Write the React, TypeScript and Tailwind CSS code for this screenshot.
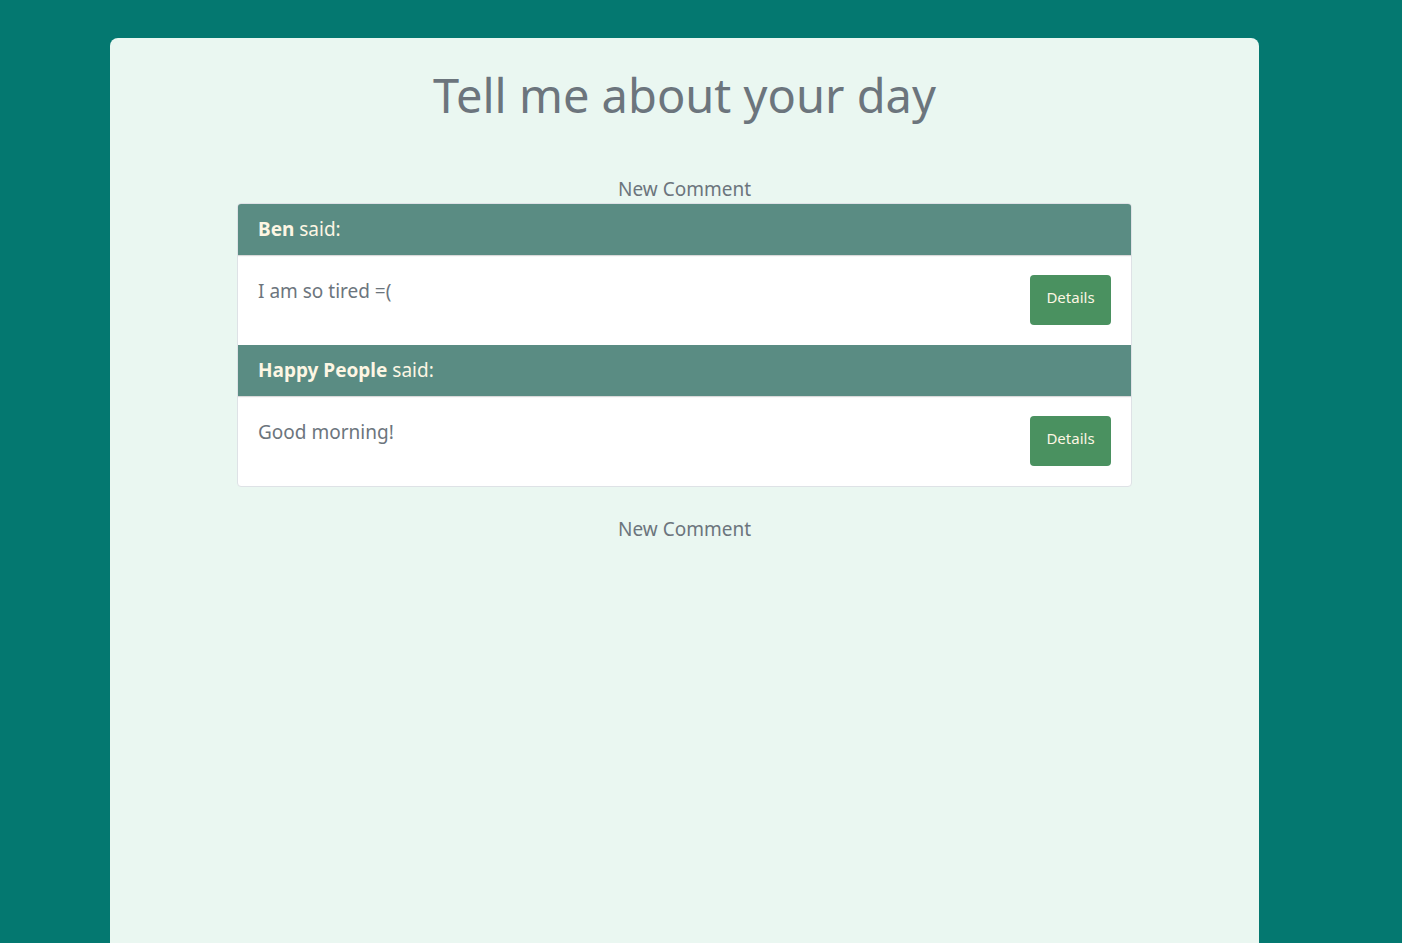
export default function App() {
  const comments = [
    { author: "Ben", text: "I am so tired =(" },
    { author: "Happy People", text: "Good morning!" },
  ]

  return (
    <div className="min-h-[943px] bg-[#047870] pl-[110px] pt-[38px] font-['Noto_Sans',sans-serif] text-[#6c757d]">
      <div className="w-[1149px] min-h-[905px] rounded-t-lg bg-[#eaf7f1] pt-[34px]">
        <h1 className="text-center text-[47px] leading-[1] font-normal text-[#6c757d]">Tell me about your day</h1>

        <div className="mt-[57px] text-center text-[19px] leading-[27px]">New Comment</div>

        <div className="mx-auto w-[895px] overflow-hidden rounded border border-[#dee2e6] bg-white">
          {comments.map((c) => (
            <div key={c.author}>
              <div className="bg-[#5a8c83] px-5 py-3 text-[19px] leading-[27px] text-[#fdf6e3] shadow-[0_1px_1px_rgba(0,0,0,0.15)]">
                <span className="font-bold">{c.author}</span> said:
              </div>
              <div className="flex items-start justify-between p-5">
                <p className="pt-[2px] text-[19px] leading-[28px] text-[#6c757d]">{c.text}</p>
                <button className="h-[50px] w-[81px] rounded bg-[#4a9160] pb-[5px] text-[15px] text-[#fdf6e3]">Details</button>
              </div>
            </div>
          ))}
        </div>

        <div className="mt-[29px] text-center text-[19px] leading-[27px]">New Comment</div>
      </div>
    </div>
  )
}
